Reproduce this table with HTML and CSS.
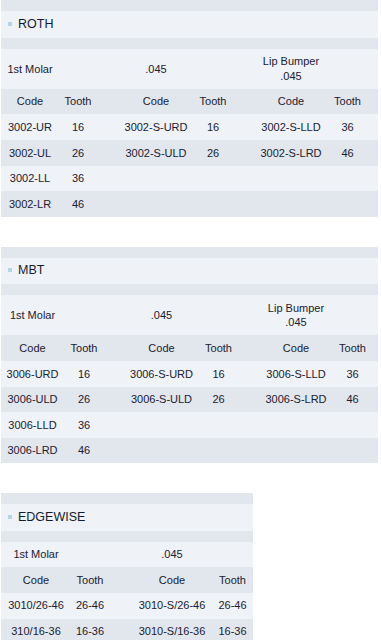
FILE: index.html
```html
<!DOCTYPE html>
<html lang="en">
<head>
<meta charset="utf-8">
<title>Buccal Tubes</title>
<link rel="stylesheet" href="styles.css">
</head>
<body>

<table class="spec spec-roth">
  <colgroup>
    <col class="c1"><col class="c2"><col class="s1">
    <col class="c3"><col class="c4"><col class="s2">
    <col class="c5"><col class="c6"><col class="s3">
  </colgroup>
  <tr class="blank"><td colspan="9"></td></tr>
  <tr class="title"><td colspan="9"><span class="bullet"></span>ROTH</td></tr>
  <tr class="blank"><td colspan="9"></td></tr>
  <tr class="groups">
    <td>1st Molar</td><td></td><td></td>
    <td>.045</td><td></td><td></td>
    <td>Lip Bumper<br>.045</td><td></td><td></td>
  </tr>
  <tr>
    <td>Code</td><td>Tooth</td><td></td>
    <td>Code</td><td>Tooth</td><td></td>
    <td>Code</td><td>Tooth</td><td></td>
  </tr>
  <tr>
    <td>3002-UR</td><td>16</td><td></td>
    <td>3002-S-URD</td><td>16</td><td></td>
    <td>3002-S-LLD</td><td>36</td><td></td>
  </tr>
  <tr>
    <td>3002-UL</td><td>26</td><td></td>
    <td>3002-S-ULD</td><td>26</td><td></td>
    <td>3002-S-LRD</td><td>46</td><td></td>
  </tr>
  <tr>
    <td>3002-LL</td><td>36</td><td></td>
    <td></td><td></td><td></td>
    <td></td><td></td><td></td>
  </tr>
  <tr>
    <td>3002-LR</td><td>46</td><td></td>
    <td></td><td></td><td></td>
    <td></td><td></td><td></td>
  </tr>
</table>

<table class="spec spec-mbt">
  <colgroup>
    <col class="c1"><col class="c2"><col class="s1">
    <col class="c3"><col class="c4"><col class="s2">
    <col class="c5"><col class="c6"><col class="s3">
  </colgroup>
  <tr class="blank"><td colspan="9"></td></tr>
  <tr class="title"><td colspan="9"><span class="bullet"></span>MBT</td></tr>
  <tr class="blank"><td colspan="9"></td></tr>
  <tr class="groups">
    <td>1st Molar</td><td></td><td></td>
    <td>.045</td><td></td><td></td>
    <td>Lip Bumper<br>.045</td><td></td><td></td>
  </tr>
  <tr>
    <td>Code</td><td>Tooth</td><td></td>
    <td>Code</td><td>Tooth</td><td></td>
    <td>Code</td><td>Tooth</td><td></td>
  </tr>
  <tr>
    <td>3006-URD</td><td>16</td><td></td>
    <td>3006-S-URD</td><td>16</td><td></td>
    <td>3006-S-LLD</td><td>36</td><td></td>
  </tr>
  <tr>
    <td>3006-ULD</td><td>26</td><td></td>
    <td>3006-S-ULD</td><td>26</td><td></td>
    <td>3006-S-LRD</td><td>46</td><td></td>
  </tr>
  <tr>
    <td>3006-LLD</td><td>36</td><td></td>
    <td></td><td></td><td></td>
    <td></td><td></td><td></td>
  </tr>
  <tr>
    <td>3006-LRD</td><td>46</td><td></td>
    <td></td><td></td><td></td>
    <td></td><td></td><td></td>
  </tr>
</table>

<table class="spec spec-edge">
  <colgroup>
    <col class="c1"><col class="c2"><col class="s1">
    <col class="c3"><col class="c4">
  </colgroup>
  <tr class="blank"><td colspan="5"></td></tr>
  <tr class="title"><td colspan="5"><span class="bullet"></span>EDGEWISE</td></tr>
  <tr class="blank"><td colspan="5"></td></tr>
  <tr>
    <td>1st Molar</td><td></td><td></td>
    <td>.045</td><td></td>
  </tr>
  <tr>
    <td>Code</td><td>Tooth</td><td></td>
    <td>Code</td><td>Tooth</td>
  </tr>
  <tr>
    <td>3010/26-46</td><td>26-46</td><td></td>
    <td>3010-S/26-46</td><td>26-46</td>
  </tr>
  <tr>
    <td>310/16-36</td><td>16-36</td><td></td>
    <td>3010-S/16-36</td><td>16-36</td>
  </tr>
</table>

</body>
</html>
```

FILE: styles.css
```css
html, body {
  margin: 0;
  padding: 0;
  background: #ffffff;
}

body {
  font-family: "Liberation Sans", Arial, sans-serif;
  font-size: 11px;
  color: #1a2131;
}

/* product spec tables */
.spec {
  table-layout: fixed;
  border-collapse: collapse;
  border-spacing: 0;
  margin: 0 0 29.7px 1px;
}

.spec td {
  padding: 5.5px 0;
  line-height: 14.6px;
  text-align: center;
  vertical-align: middle;
  white-space: nowrap;
}

.spec tr:nth-child(odd) {
  background: #e2e6ed;
}

.spec tr:nth-child(even) {
  background: #eff2f7;
}

.spec tr.blank td {
  height: 11px;
  padding: 0;
  line-height: 0;
}

.spec tr.title td {
  text-align: left;
  padding: 5.5px 0 5.5px 7px;
  line-height: 15.7px;
  font-size: 12.5px;
  color: #141b30;
}

.bullet {
  display: inline-block;
  width: 4px;
  height: 4px;
  background: #b3d5e5;
  margin-right: 6px;
  vertical-align: 2px;
}

/* ROTH column widths */
.spec-roth { width: 377px; }
.spec-roth .c1 { width: 58px; }
.spec-roth .c2 { width: 38px; }
.spec-roth .s1 { width: 22px; }
.spec-roth .c3 { width: 74px; }
.spec-roth .c4 { width: 40px; }
.spec-roth .s2 { width: 21px; }
.spec-roth .c5 { width: 74px; }
.spec-roth .c6 { width: 39px; }
.spec-roth .s3 { width: 11px; }

/* MBT column widths */
.spec-mbt { width: 377px; }
.spec-mbt .c1 { width: 63px; }
.spec-mbt .c2 { width: 40px; }
.spec-mbt .s1 { width: 20px; }
.spec-mbt .c3 { width: 75px; }
.spec-mbt .c4 { width: 39px; }
.spec-mbt .s2 { width: 21px; }
.spec-mbt .c5 { width: 74px; }
.spec-mbt .c6 { width: 39px; }
.spec-mbt .s3 { width: 6px; }

/* EDGEWISE column widths */
.spec-edge { width: 252px; }
.spec-edge .c1 { width: 70px; }
.spec-edge .c2 { width: 38px; }
.spec-edge .s1 { width: 23px; }
.spec-edge .c3 { width: 80px; }
.spec-edge .c4 { width: 41px; }
```
